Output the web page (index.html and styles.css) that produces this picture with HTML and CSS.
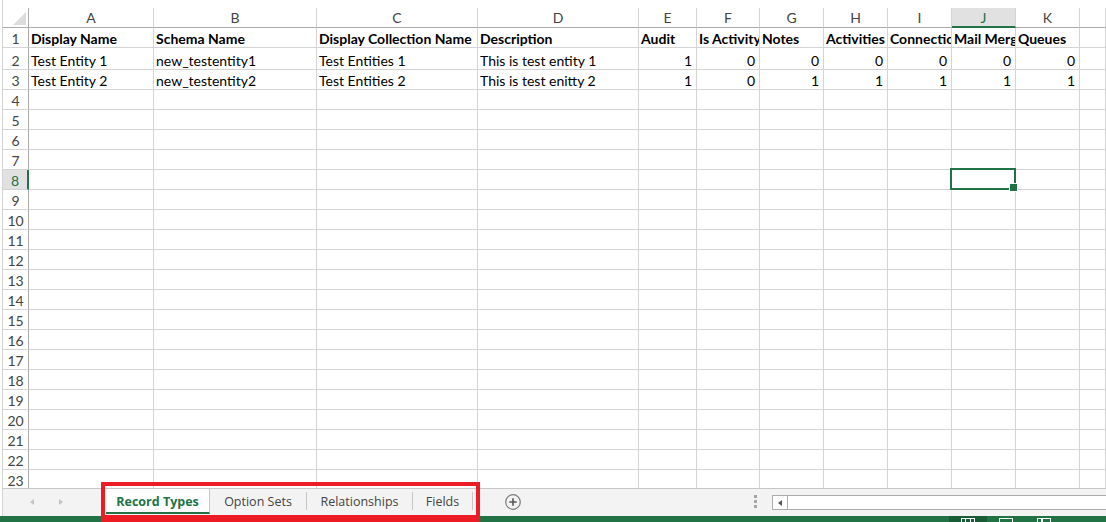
FILE: index.html
```html
<!DOCTYPE html>
<html>
<head>
<meta charset="utf-8">
<link rel="stylesheet" href="styles.css">
</head>
<body>
<div class="app">
  <div class="frame">
    <div class="topgap"></div>
    <div class="sheet">
      <div class="row head"><b class="rh corner"><span class="tri"></span></b><i>A</i><i>B</i><i>C</i><i>D</i><i>E</i><i>F</i><i>G</i><i>H</i><i>I</i><i class="sel">J</i><i>K</i><i></i></div>
      <div class="row bold"><b class="rh">1</b><i>Display Name</i><i>Schema Name</i><i>Display Collection Name</i><i>Description</i><i>Audit</i><i>Is Activity</i><i>Notes</i><i>Activities</i><i>Connections</i><i>Mail Merge</i><i>Queues</i><i></i></div>
      <div class="row tall"><b class="rh">2</b><i>Test Entity 1</i><i>new_testentity1</i><i>Test Entities 1</i><i>This is test entity 1</i><i class="n">1</i><i class="n">0</i><i class="n">0</i><i class="n">0</i><i class="n">0</i><i class="n">0</i><i class="n">0</i><i></i></div>
      <div class="row"><b class="rh">3</b><i>Test Entity 2</i><i>new_testentity2</i><i>Test Entities 2</i><i>This is test enitty 2</i><i class="n">1</i><i class="n">0</i><i class="n">1</i><i class="n">1</i><i class="n">1</i><i class="n">1</i><i class="n">1</i><i></i></div>
      <div class="row"><b class="rh">4</b><i></i><i></i><i></i><i></i><i></i><i></i><i></i><i></i><i></i><i></i><i></i><i></i></div>
      <div class="row"><b class="rh">5</b><i></i><i></i><i></i><i></i><i></i><i></i><i></i><i></i><i></i><i></i><i></i><i></i></div>
      <div class="row"><b class="rh">6</b><i></i><i></i><i></i><i></i><i></i><i></i><i></i><i></i><i></i><i></i><i></i><i></i></div>
      <div class="row"><b class="rh">7</b><i></i><i></i><i></i><i></i><i></i><i></i><i></i><i></i><i></i><i></i><i></i><i></i></div>
      <div class="row"><b class="rh sel">8</b><i></i><i></i><i></i><i></i><i></i><i></i><i></i><i></i><i></i><i class="cur"></i><i></i><i></i></div>
      <div class="row"><b class="rh">9</b><i></i><i></i><i></i><i></i><i></i><i></i><i></i><i></i><i></i><i></i><i></i><i></i></div>
      <div class="row"><b class="rh">10</b><i></i><i></i><i></i><i></i><i></i><i></i><i></i><i></i><i></i><i></i><i></i><i></i></div>
      <div class="row"><b class="rh">11</b><i></i><i></i><i></i><i></i><i></i><i></i><i></i><i></i><i></i><i></i><i></i><i></i></div>
      <div class="row"><b class="rh">12</b><i></i><i></i><i></i><i></i><i></i><i></i><i></i><i></i><i></i><i></i><i></i><i></i></div>
      <div class="row"><b class="rh">13</b><i></i><i></i><i></i><i></i><i></i><i></i><i></i><i></i><i></i><i></i><i></i><i></i></div>
      <div class="row"><b class="rh">14</b><i></i><i></i><i></i><i></i><i></i><i></i><i></i><i></i><i></i><i></i><i></i><i></i></div>
      <div class="row"><b class="rh">15</b><i></i><i></i><i></i><i></i><i></i><i></i><i></i><i></i><i></i><i></i><i></i><i></i></div>
      <div class="row"><b class="rh">16</b><i></i><i></i><i></i><i></i><i></i><i></i><i></i><i></i><i></i><i></i><i></i><i></i></div>
      <div class="row"><b class="rh">17</b><i></i><i></i><i></i><i></i><i></i><i></i><i></i><i></i><i></i><i></i><i></i><i></i></div>
      <div class="row"><b class="rh">18</b><i></i><i></i><i></i><i></i><i></i><i></i><i></i><i></i><i></i><i></i><i></i><i></i></div>
      <div class="row"><b class="rh">19</b><i></i><i></i><i></i><i></i><i></i><i></i><i></i><i></i><i></i><i></i><i></i><i></i></div>
      <div class="row"><b class="rh">20</b><i></i><i></i><i></i><i></i><i></i><i></i><i></i><i></i><i></i><i></i><i></i><i></i></div>
      <div class="row"><b class="rh">21</b><i></i><i></i><i></i><i></i><i></i><i></i><i></i><i></i><i></i><i></i><i></i><i></i></div>
      <div class="row"><b class="rh">22</b><i></i><i></i><i></i><i></i><i></i><i></i><i></i><i></i><i></i><i></i><i></i><i></i></div>
      <div class="row"><b class="rh">23</b><i></i><i></i><i></i><i></i><i></i><i></i><i></i><i></i><i></i><i></i><i></i><i></i></div>
    </div>
    <div class="tabbar">
      <div class="nav"><span class="arr left"></span><span class="arr right"></span></div>
      <div class="tabs">
        <div class="tab active w1">Record Types</div>
        <div class="tab w2">Option Sets</div>
        <div class="tab w3">Relationships</div>
        <div class="tab w4">Fields</div>
      </div>
      <div class="plus">
        <svg width="16" height="16" viewBox="0 0 16 16"><circle cx="8" cy="8" r="7.3" fill="none" stroke="#7a7a7a" stroke-width="1.2"/><path d="M8 4.3v7.4M4.3 8h7.4" stroke="#555" stroke-width="1.6"/></svg>
      </div>
      <div class="spacer"></div>
      <div class="dots"><span></span><span></span><span></span></div>
      <div class="hscroll"><div class="sbtn"><span class="sarr"></span></div><div class="strack"></div></div>
    </div>
  </div>
  <div class="status">
    <div class="views">
      <div class="vbtn on"><svg width="14" height="6" viewBox="0 0 14 6"><rect x="0.5" y="2.5" width="13" height="6" fill="none" stroke="#fff"/><path d="M4.5 2v4M9.5 2v4" stroke="#fff"/></svg></div>
      <div class="vbtn"><svg width="14" height="6" viewBox="0 0 14 6"><rect x="0.5" y="2.5" width="13" height="6" fill="none" stroke="#fff"/></svg></div>
      <div class="vbtn"><svg width="14" height="6" viewBox="0 0 14 6"><rect x="0.5" y="2.5" width="13" height="6" fill="none" stroke="#fff"/><path d="M5 2v4" stroke="#fff" stroke-width="2"/></svg></div>
    </div>
  </div>
  <div class="annot"></div>
</div>
</body>
</html>
```
FILE: styles.css
```css
* { box-sizing: border-box; margin: 0; padding: 0; }
html, body { width: 1106px; height: 522px; overflow: hidden; background: #fff; }
body { font-family: Lato, "Liberation Sans", sans-serif; }

.app { position: relative; display: flex; flex-direction: column; height: 522px; }
.frame { margin-left: 2px; border-left: 1px solid #d4d4d4; display: flex; flex-direction: column; flex: none; }
.topgap { height: 8px; }
.sheet { height: 480px; overflow: hidden; }

.row {
  display: grid;
  grid-template-columns: 26px 125px 163px 161px 161px 58px 63px 64px 64px 64px 64px 64px 1fr;
  height: 20px;
}
.row.tall { height: 22px; }
.row > * {
  display: flex;
  align-items: flex-end;
  border-right: 1px solid #d4d4d4;
  border-bottom: 1px solid #d4d4d4;
  overflow: hidden;
  white-space: nowrap;
  font-style: normal;
  font-weight: normal;
  font-size: 14px;
  line-height: 16px;
  padding: 0 2px;
  color: #000;
}
.row.bold > i { font-weight: bold; }
.row > .n { justify-content: flex-end; padding-right: 4px; }

.row > .rh {
  justify-content: center;
  border-right-color: #ababab;
  color: #444;
  font-size: 14px;
  padding: 0;
}
.row > .rh.sel { background: #e1e1e1; color: #217346; border-right: 2px solid #217346; }

.row.head > * {
  justify-content: center;
  align-items: center;
  color: #444;
  font-size: 14px;
  border-bottom-color: #ababab;
  line-height: 19px;
}
.row.head > .sel { background: #e1e1e1; color: #217346; border-bottom: 2px solid #217346; }
.row.head > .corner { align-items: flex-end; justify-content: flex-end; padding: 0 2px 2px 0; }
.tri { display: block; width: 0; height: 0; border-left: 13px solid transparent; border-bottom: 13px solid #dcdcdc; }

.row > .cur { position: relative; overflow: visible; }
.cur::before {
  content: "";
  position: absolute;
  top: -2px; left: -2px; right: -1px; bottom: -1px;
  border: 2px solid #217346;
  z-index: 2;
}
.cur::after {
  content: "";
  position: absolute;
  right: -3px; bottom: -3px;
  width: 7px; height: 7px;
  background: #217346;
  border: 1px solid #fff;
  z-index: 3;
}

.tabbar {
  height: 28px;
  background: #f3f3f3;
  border-top: 1px solid #c6c6c6;
  display: flex;
  align-items: stretch;
  font-family: "Open Sans", "Noto Sans", sans-serif;
}
.nav { width: 103px; flex: none; display: flex; align-items: center; padding: 0 0 2px 27px; gap: 25px; }
.arr { display: block; width: 0; height: 0; border-top: 3px solid transparent; border-bottom: 3px solid transparent; }
.arr.left { border-right: 4px solid #c3c3c3; }
.arr.right { border-left: 4px solid #c3c3c3; }

.tabs { display: flex; align-items: stretch; flex: none; }
.tab {
  display: flex;
  align-items: center;
  justify-content: center;
  font-size: 12.5px;
  color: #444;
  margin: 3px 0 6px;
  border-right: 1px solid #c6c6c6;
  padding-top: 1px;
}
.tab.active {
  margin: 0 0 2px;
  background: #fff;
  border-bottom: 2px solid #217346;
  color: #217346;
  font-weight: bold;
  padding: 2px 0 0 0;
}
.w1 { width: 104px; }
.w2 { width: 97px; }
.w3 { width: 106px; }
.w4 { width: 60px; }

.plus { flex: none; margin-left: 32px; display: flex; align-items: center; padding-bottom: 1px; }
.plus svg { display: block; }
.spacer { flex: none; width: 233px; }
.dots { flex: none; width: 3px; display: flex; flex-direction: column; justify-content: center; gap: 2px; padding-bottom: 2px; }
.dots span { display: block; width: 3px; height: 3px; background: #a6a6a6; }
.hscroll {
  flex: 1;
  margin: 6px 0 6px 15px;
  height: 15px;
  align-self: center;
  border: 1px solid #ababab;
  border-right: none;
  background: #fff;
  display: flex;
}
.sbtn { width: 15px; border-right: 1px solid #ababab; display: flex; align-items: center; justify-content: center; }
.sarr { display: block; width: 0; height: 0; border-top: 3px solid transparent; border-bottom: 3px solid transparent; border-right: 4px solid #555; }
.strack { flex: 1; }

.status { height: 6px; background: #217346; display: flex; justify-content: flex-end; flex: none; }
.views { display: flex; margin-right: 43px; }
.vbtn { width: 38px; display: flex; justify-content: center; }
.vbtn.on { background: #185c37; }
.vbtn svg { display: block; }

.annot {
  position: absolute;
  left: 101px;
  top: 482px;
  width: 379px;
  height: 40px;
  border: 4px solid #ed1c24;
  border-bottom-width: 7px;
  pointer-events: none;
}
```
